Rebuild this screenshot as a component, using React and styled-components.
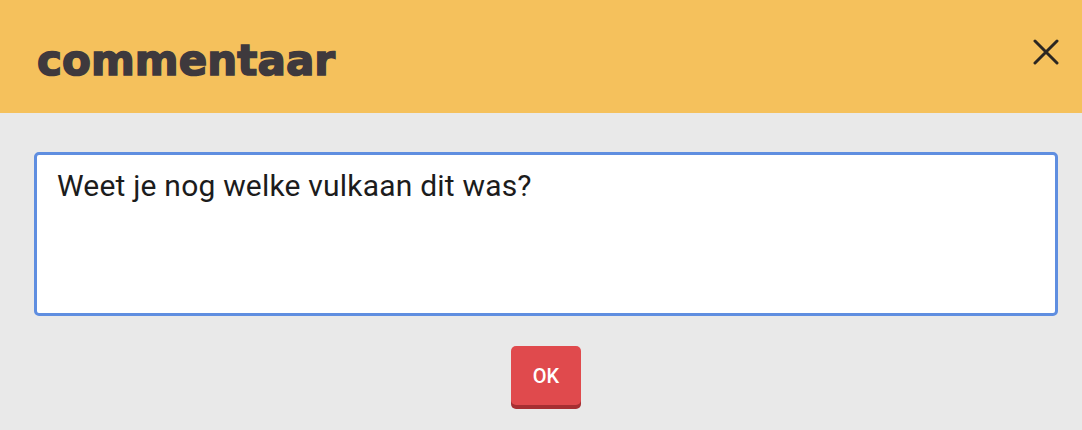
import React from "react"
import styled, { createGlobalStyle } from "styled-components"

const GlobalStyle = createGlobalStyle`
  html, body {
    margin: 0;
    padding: 0;
    background: #e9e9e9;
  }
  #root {
    width: 1082px;
    height: 430px;
  }
`

const Dialog = styled.div`
  width: 1082px;
  height: 430px;
  display: flex;
  flex-direction: column;
  background: #e9e9e9;
`

const Header = styled.div`
  height: 113px;
  background: #f5c15c;
  display: flex;
  align-items: center;
  justify-content: space-between;
  padding: 0 14px 0 37px;
  box-sizing: border-box;
`

const Title = styled.h1`
  margin: 0;
  margin-top: 7px;
  font-family: "DejaVu Sans", sans-serif;
  font-weight: 700;
  font-size: 42px;
  letter-spacing: 0.1px;
  color: #3e393d;
  -webkit-text-stroke: 1.6px #3e393d;
`

const CloseButton = styled.button`
  border: none;
  background: none;
  padding: 0;
  width: 44px;
  height: 44px;
  display: flex;
  align-items: center;
  justify-content: center;
  margin-top: -10px;
  cursor: pointer;
`

const Body = styled.div`
  flex: 1;
  display: flex;
  flex-direction: column;
  align-items: center;
  padding: 39px 24px 0 34px;
  box-sizing: border-box;
`

const CommentField = styled.textarea`
  width: 1024px;
  height: 164px;
  box-sizing: border-box;
  border: 3px solid #5f8ee0;
  border-radius: 5px;
  background: #fff;
  padding: 13px 20px;
  font-family: Roboto, "Noto Sans", sans-serif;
  font-size: 30px;
  line-height: 36px;
  letter-spacing: 0.2px;
  color: #1c1c1c;
  resize: none;
  outline: none;
  align-self: flex-start;
`

const OkButton = styled.button`
  margin-top: 30px;
  width: 70px;
  height: 59px;
  box-sizing: border-box;
  border: none;
  border-radius: 5px;
  background: #e04a4d;
  box-shadow: 0 4px 0 #a62f32;
  color: #fff;
  font-family: Roboto, "Noto Sans", sans-serif;
  font-size: 20px;
  font-weight: 500;
  padding-bottom: 0;
  cursor: pointer;
`

export default function App() {
  return (
    <>
      <GlobalStyle />
      <Dialog>
        <Header>
          <Title>commentaar</Title>
          <CloseButton aria-label="close">
            <svg width="26" height="26" viewBox="0 0 26 26">
              <path
                d="M2 2 L24 24 M24 2 L2 24"
                stroke="#2b2722"
                strokeWidth="3"
                strokeLinecap="round"
              />
            </svg>
          </CloseButton>
        </Header>
        <Body>
          <CommentField defaultValue="Weet je nog welke vulkaan dit was?" />
          <OkButton>OK</OkButton>
        </Body>
      </Dialog>
    </>
  )
}
